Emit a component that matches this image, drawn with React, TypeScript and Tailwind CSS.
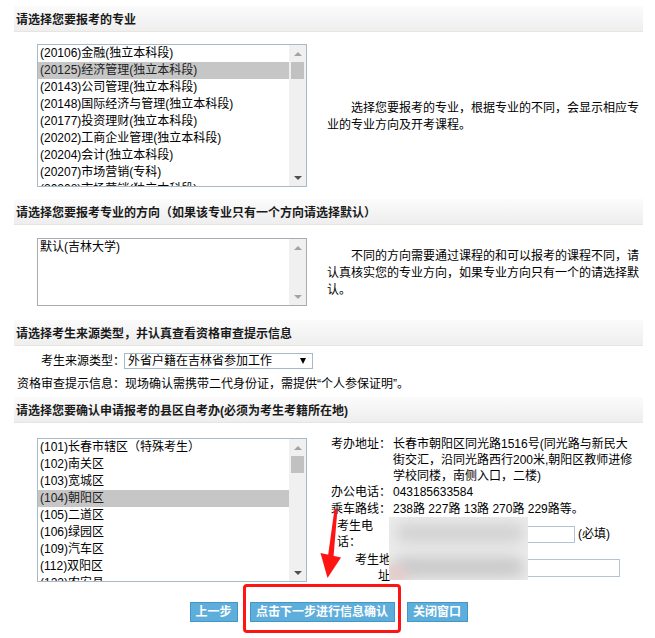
import React from 'react';

const majors = [
  '(20106)金融(独立本科段)',
  '(20125)经济管理(独立本科段)',
  '(20143)公司管理(独立本科段)',
  '(20148)国际经济与管理(独立本科段)',
  '(20177)投资理财(独立本科段)',
  '(20202)工商企业管理(独立本科段)',
  '(20204)会计(独立本科段)',
  '(20207)市场营销(专科)',
  '(20208)市场营销(独立本科段)',
];

const districts = [
  '(101)长春市辖区（特殊考生）',
  '(102)南关区',
  '(103)宽城区',
  '(104)朝阳区',
  '(105)二道区',
  '(106)绿园区',
  '(109)汽车区',
  '(112)双阳区',
  '(122)农安县',
];

function Arrow({ up, dark }: { up?: boolean; dark?: boolean }) {
  let tri = 'border-x-[4px] border-x-transparent border-t-[4px] border-t-[#a3a3a3]';
  if (up) tri = 'border-x-[4px] border-x-transparent border-b-[4px] border-b-[#a3a3a3]';
  if (!up && dark) tri = 'border-x-[4px] border-x-transparent border-t-[4px] border-t-[#505050]';
  return (
    <div className="h-[17px] flex items-center justify-center">
      <div className={`w-0 h-0 ${tri}`} />
    </div>
  );
}

interface ListBoxProps {
  items: string[];
  selected?: number;
  boxClass: string;
  thumb?: boolean;
  downDark?: boolean;
}

function ListBox({ items, selected, boxClass, thumb, downDark }: ListBoxProps) {
  return (
    <div className={`flex w-[270px] shrink-0 border bg-white ${boxClass}`}>
      <div className="flex-1 overflow-hidden">
        {items.map((t, i) => (
          <div
            key={t}
            className={`h-[17px] leading-[17px] pl-[2px] whitespace-nowrap ${
              i === selected ? 'bg-[#c6c6c6] text-[#222]' : ''
            }`}
          >
            {t}
          </div>
        ))}
      </div>
      <div className="w-[17px] bg-[#f0f0f0] flex flex-col">
        <Arrow up />
        {thumb && <div className="h-[17px] mx-[2px] bg-[#c1c1c1]" />}
        <div className="flex-1" />
        <Arrow dark={downDark} />
      </div>
    </div>
  );
}

function Bar({ children }: { children: React.ReactNode }) {
  return (
    <div className="h-[26px] flex items-center pt-[2px] pl-[2px] font-bold text-[#1a1a1a] bg-linear-to-b from-[#fbfbfb] to-[#eeeeee] border-b border-[#e8e6dc]">
      {children}
    </div>
  );
}

function BlueButton({ label, width }: { label: string; width: string }) {
  return (
    <button
      className={`h-[20px] ${width} flex items-center justify-center bg-[#5eaedb] border border-[#4596c8] text-white font-bold leading-none`}
    >
      {label}
    </button>
  );
}

export default function App() {
  return (
    <div className="relative w-[655px] min-h-[638px] bg-white text-black text-[12px] font-['Liberation_Sans','Noto_Sans_CJK_SC',sans-serif]">
      <div className="ml-[14px] w-[629px] pt-[6px]">
        {/* 专业 */}
        <Bar>请选择您要报考的专业</Bar>
        <div className="flex items-center pl-[23px] pt-[12px] pb-[12px]">
          <ListBox
            items={majors}
            selected={1}
            boxClass="h-[143px] border-[#a8b9c7]"
            thumb
            downDark
          />
          <p className="ml-[20px] w-[316px] pt-[2px] indent-[24px] leading-[17px]">
            选择您要报考的专业，根据专业的不同，会显示相应专业的专业方向及开考课程。
          </p>
        </div>

        {/* 方向 */}
        <Bar>请选择您要报考专业的方向（如果该专业只有一个方向请选择默认）</Bar>
        <div className="flex items-center pl-[23px] pt-[13px] pb-[14px]">
          <ListBox items={['默认(吉林大学)']} boxClass="h-[68px] border-[#ababab]" />
          <p className="ml-[20px] w-[316px] pt-[3px] indent-[24px] leading-[17px]">
            不同的方向需要通过课程的和可以报考的课程不同，请认真核实您的专业方向，如果专业方向只有一个的请选择默认。
          </p>
        </div>

        {/* 来源类型 */}
        <Bar>请选择考生来源类型，并认真查看资格审查提示信息</Bar>
        <div className="pt-[7px] pb-[4px]">
          <div className="flex items-center pl-[27px] h-[16px]">
            <span className="leading-[16px]">考生来源类型：</span>
            <div className="-ml-[1px] w-[189px] h-[16px] flex items-center justify-between border border-[#a5b9c9] pl-[3px] pr-[6px] leading-[14px]">
              <span>外省户籍在吉林省参加工作</span>
              <div className="w-0 h-0 border-x-[3px] border-x-transparent border-t-[6px] border-t-black" />
            </div>
          </div>
          <div className="mt-[7px] pl-[3px] leading-[17px]">
            资格审查提示信息：现场确认需携带二代身份证，需提供“个人参保证明”。
          </div>
        </div>

        {/* 自考办 */}
        <Bar>请选择您要确认申请报考的县区自考办(必须为考生考籍所在地)</Bar>
        <div className="flex items-center pl-[23px] pt-[13px]">
          <ListBox
            items={districts}
            selected={3}
            boxClass="h-[144px] border-[#a8b9c7]"
            thumb
            downDark
          />
          <div className="ml-[24px] flex flex-col">
            <div className="flex leading-[16px]">
              <span className="w-[62px] shrink-0">考办地址：</span>
              <span className="w-[244px]">
                长春市朝阳区同光路1516号(同光路与新民大街交汇，沿同光路西行200米,朝阳区教师进修学校同楼，南侧入口，二楼)
              </span>
            </div>
            <div className="flex leading-[17px]">
              <span className="w-[62px] shrink-0">办公电话：</span>
              <span>043185633584</span>
            </div>
            <div className="flex leading-[17px]">
              <span className="w-[62px] shrink-0">乘车路线：</span>
              <span>238路 227路 13路 270路 229路等。</span>
            </div>
            <div className="flex items-center h-[32px]">
              <span className="ml-[6px] w-[40px] shrink-0 leading-[16px]">考生电话：</span>
              <div className="ml-[16px] w-[182px] h-[17px] border border-[#b4c4d2] bg-white" />
              <span className="ml-[3px]">(必填)</span>
            </div>
            <div className="flex items-center h-[32px] mt-[2px]">
              <div className="ml-[24px] w-[38px] shrink-0 leading-[16px] whitespace-nowrap">
                <div>考生地</div>
                <div className="pl-[23px]">址：</div>
              </div>
              <div className="w-[227px] h-[18px] border border-[#b4c4d2] bg-white" />
            </div>
          </div>
        </div>

        <div className="flex justify-center gap-[12px] mt-[18px]">
          <BlueButton label="上一步" width="w-[48px]" />
          <BlueButton label="点击下一步进行信息确认" width="w-[145px]" />
          <BlueButton label="关闭窗口" width="w-[61px]" />
        </div>
      </div>

      {/* privacy blur over personal info */}
      <div className="absolute left-[389px] top-[517px] w-[139px] h-[63px] overflow-hidden bg-[#ececec]">
        <div className="absolute left-[6px] top-[6px] w-[130px] h-[20px] rounded-full bg-[#d2d2d2] blur-[7px]" />
        <div className="absolute left-[4px] top-[40px] w-[132px] h-[20px] rounded-full bg-[#c9c9c9] blur-[7px]" />
        <div className="absolute left-[-6px] top-[48px] w-[24px] h-[18px] rounded-full bg-[#e4c9c9] blur-[6px]" />
      </div>

      {/* red annotation */}
      <div className="absolute left-[243px] top-[584px] w-[158px] h-[49px] border-[3px] border-[#ff1414] rounded-[4px]" />
      <svg className="absolute left-[315px] top-[505px]" width="32" height="78" viewBox="315 505 32 78">
        <polygon points="334.5,509 337.5,509 333.5,557 328,556" fill="#ff1414" />
        <polygon points="320.5,553 341,557.5 327.5,578" fill="#ff1414" />
      </svg>
    </div>
  );
}
